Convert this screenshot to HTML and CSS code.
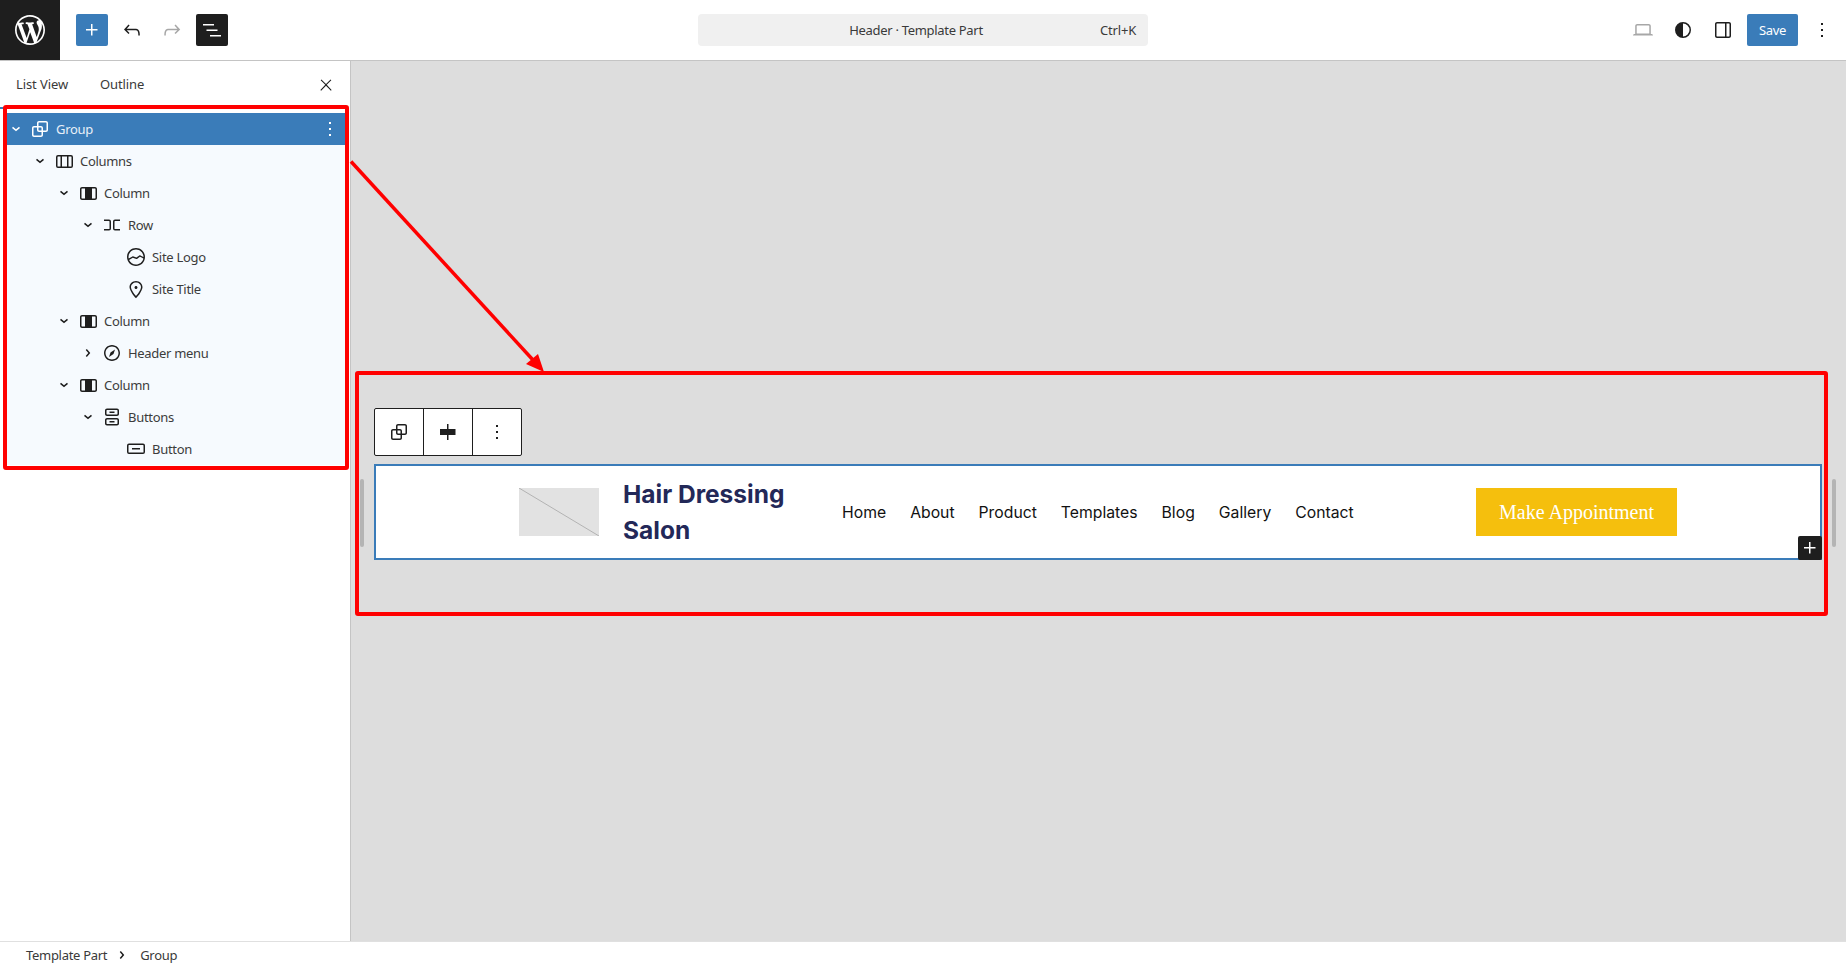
FILE: index.html
```html
<!DOCTYPE html>
<html lang="en">
<head>
<meta charset="utf-8">
<title>Header · Template Part</title>
<link rel="stylesheet" href="styles.css">
</head>
<body>
<header class="topbar">
  <div class="top-left">
    <a class="wp-logo"><svg width="36" height="36" viewBox="-2 -2 24 24" fill="#fff"><path d="M20 10c0-5.51-4.49-10-10-10C4.48 0 0 4.49 0 10c0 5.52 4.48 10 10 10 5.51 0 10-4.48 10-10zM7.78 15.37L4.37 6.22c.55-.02 1.17-.08 1.17-.08.5-.06.44-1.13-.06-1.11 0 0-1.45.11-2.37.11-.18 0-.37 0-.58-.01C4.12 2.69 6.87 1.11 10 1.11c2.33 0 4.45.87 6.05 2.34-.68-.11-1.65.39-1.65 1.58 0 .74.45 1.36.9 2.1.35.61.55 1.36.55 2.46 0 1.49-1.4 5-1.4 5l-3.03-8.37c.54-.02.82-.17.82-.17.5-.05.44-1.25-.06-1.22 0 0-1.44.12-2.38.12-.87 0-2.33-.12-2.33-.12-.5-.03-.56 1.2-.06 1.22l.92.08 1.26 3.41zM17.41 10c.24-.64.74-1.87.43-4.25.7 1.29 1.05 2.71 1.05 4.25 0 3.29-1.73 6.24-4.4 7.78.97-2.59 1.94-5.2 2.92-7.78zM6.1 18.09C3.12 16.65 1.11 13.53 1.11 10c0-1.3.23-2.48.72-3.59C3.25 10.3 4.67 14.2 6.1 18.09zm4.03-6.63l2.58 6.98c-.86.29-1.76.45-2.71.45-.79 0-1.57-.11-2.29-.33.81-2.38 1.62-4.74 2.42-7.1z"/></svg></a>
    <div class="tools">
      <button class="btn primary"><svg class="ic" viewBox="0 0 24 24"><path d="M11 12.5V17.5H12.5V12.5H17.5V11H12.5V6H11V11H6V12.5H11Z"/></svg></button>
      <button class="btn"><svg class="ic" viewBox="0 0 24 24"><path d="M18.3 11.7c-.6-.6-1.4-.9-2.3-.9H6.7l2.9-3.3-1.1-1-4.5 5L8.5 16l1-1-2.7-2.7H16c.5 0 .9.2 1.3.5 1 1 1 3.4 1 4.5v.3h1.5v-.2c0-1.5 0-4.3-1.5-5.7z"/></svg></button>
      <button class="btn muted"><svg class="ic" viewBox="0 0 24 24"><path d="M15.6 6.5l-1.1 1 2.9 3.3H8c-.9 0-1.7.3-2.3.9-1.4 1.5-1.4 4.2-1.4 5.6v.2h1.5v-.3c0-1.1 0-3.5 1-4.5.3-.3.7-.5 1.3-.5h9.2L14.5 15l1.1 1.1 4.6-4.6-4.6-5z"/></svg></button>
      <button class="btn dark"><svg class="ic" viewBox="0 0 24 24"><path d="M3 6h11v1.5H3V6Zm3.5 5.5h11V13h-11v-1.5ZM21 17H10v1.5h11V17Z"/></svg></button>
    </div>
  </div>
  <div class="command">
    <span class="command-title">Header · Template Part</span>
    <span class="command-key">Ctrl+K</span>
  </div>
  <div class="top-right">
    <button class="btn muted"><svg class="ic" viewBox="0 0 24 24"><path d="M20.5 16h-.7V8c0-1.1-.9-2-2-2H6.2c-1.1 0-2 .9-2 2v8h-.7c-.8 0-1.5.7-1.5 1.5h20c0-.8-.7-1.5-1.5-1.5zM5.7 8c0-.3.2-.5.5-.5h11.6c.3 0 .5.2.5.5v7.6H5.7V8z"/></svg></button>
    <button class="btn"><svg class="ic" viewBox="0 0 24 24"><path fill-rule="evenodd" d="M12 4a8 8 0 1 0 0 16 8 8 0 0 0 0-16zm0 1.5a6.5 6.5 0 0 1 0 13v-13z"/></svg></button>
    <button class="btn"><svg class="ic" viewBox="0 0 24 24"><path d="M18 4H6c-1.1 0-2 .9-2 2v12c0 1.1.9 2 2 2h12c1.1 0 2-.9 2-2V6c0-1.1-.9-2-2-2zm-4 14.5H6c-.3 0-.5-.2-.5-.5V6c0-.3.2-.5.5-.5h8v13zm4.5-.5c0 .3-.2.5-.5.5h-2.5v-13H18c.3 0 .5.2.5.5v12z"/></svg></button>
    <button class="save">Save</button>
    <button class="btn"><svg class="ic" viewBox="0 0 24 24"><path d="M13 19h-2v-2h2v2zm0-6h-2v-2h2v2zm0-6h-2V5h2v2z"/></svg></button>
  </div>
</header>

<div class="workspace">
  <aside class="sidebar">
    <div class="tabs">
      <div class="tab active">List View</div>
      <div class="tab">Outline</div>
      <svg class="ic tabs-close" viewBox="0 0 24 24"><path d="M13 11.8l6.1-6.3-1-1-6.1 6.2-6.1-6.2-1 1 6.1 6.3-6.5 6.7 1 1 6.5-6.6 6.5 6.6 1-1z"/></svg>
    </div>
    <ul class="tree">
      <li class="row selected l0">
        <svg class="ic" viewBox="0 0 24 24"><path d="m15.99 10.889-3.988 3.418-3.988-3.418.976-1.14 3.012 2.582 3.012-2.581.976 1.139Z"/></svg>
        <svg class="ic" viewBox="0 0 24 24"><path d="M18 4h-7c-1.1 0-2 .9-2 2v3H6c-1.1 0-2 .9-2 2v7c0 1.1.9 2 2 2h7c1.1 0 2-.9 2-2v-3h3c1.1 0 2-.9 2-2V6c0-1.1-.9-2-2-2zm-4.5 14c0 .3-.2.5-.5.5H6c-.3 0-.5-.2-.5-.5v-7c0-.3.2-.5.5-.5h3V13c0 1.1.9 2 2 2h2.5v3zm0-4.5H11c-.3 0-.5-.2-.5-.5v-2.5H13c.3 0 .5.2.5.5v2.5zm5-.5c0 .3-.2.5-.5.5h-3V11c0-1.1-.9-2-2-2h-2.5V6c0-.3.2-.5.5-.5h7c.3 0 .5.2.5.5v7z"/></svg>
        <span class="label">Group</span>
        <svg class="ic row-more" viewBox="0 0 24 24"><path d="M13 19h-2v-2h2v2zm0-6h-2v-2h2v2zm0-6h-2V5h2v2z"/></svg>
      </li>
      <li class="row l1">
        <svg class="ic" viewBox="0 0 24 24"><path d="m15.99 10.889-3.988 3.418-3.988-3.418.976-1.14 3.012 2.582 3.012-2.581.976 1.139Z"/></svg>
        <svg class="ic" viewBox="0 0 24 24"><path fill-rule="evenodd" d="M15 7.5h-5v10h5v-10Zm1.5 0v10H19a.5.5 0 0 0 .5-.5V8a.5.5 0 0 0-.5-.5h-2.5ZM6 7.5h2.5v10H6a.5.5 0 0 1-.5-.5V8a.5.5 0 0 1 .5-.5ZM6 6h13a2 2 0 0 1 2 2v9a2 2 0 0 1-2 2H6a2 2 0 0 1-2-2V8a2 2 0 0 1 2-2Z"/></svg>
        <span class="label">Columns</span>
      </li>
      <li class="row l2">
        <svg class="ic" viewBox="0 0 24 24"><path d="m15.99 10.889-3.988 3.418-3.988-3.418.976-1.14 3.012 2.582 3.012-2.581.976 1.139Z"/></svg>
        <svg class="ic" viewBox="0 0 24 24"><path d="M19 6H6c-1.1 0-2 .9-2 2v9c0 1.1.9 2 2 2h13c1.1 0 2-.9 2-2V8c0-1.1-.9-2-2-2zM6 17.5c-.3 0-.5-.2-.5-.5V8c0-.3.2-.5.5-.5h3v10H6zm13.5-.5c0 .3-.2.5-.5.5h-3v-10h3c.3 0 .5.2.5.5v9z"/></svg>
        <span class="label">Column</span>
      </li>
      <li class="row l3">
        <svg class="ic" viewBox="0 0 24 24"><path d="m15.99 10.889-3.988 3.418-3.988-3.418.976-1.14 3.012 2.582 3.012-2.581.976 1.139Z"/></svg>
        <svg class="ic" viewBox="0 0 24 24"><path d="M4 6.5h5a2 2 0 0 1 2 2v7a2 2 0 0 1-2 2H4V16h5a.5.5 0 0 0 .5-.5v-7A.5.5 0 0 0 9 8H4V6.5Zm16 0h-5a2 2 0 0 0-2 2v7a2 2 0 0 0 2 2h5V16h-5a.5.5 0 0 1-.5-.5v-7A.5.5 0 0 1 15 8h5V6.5Z"/></svg>
        <span class="label">Row</span>
      </li>
      <li class="row l4">
        <span class="spacer"></span>
        <svg class="ic" viewBox="0 0 24 24"><path d="M12 3c-5 0-9 4-9 9s4 9 9 9 9-4 9-9-4-9-9-9zm0 1.5c4.1 0 7.5 3.4 7.5 7.5v.1c-1.4-.8-3.3-1.7-3.4-1.8-.2-.1-.5-.1-.8.1l-2.9 2.1L9 11.3c-.2-.1-.4 0-.6.1l-3.7 2.2c-.1-.5-.2-1-.2-1.5 0-4.1 3.4-7.5 7.5-7.5zm0 15c-3.1 0-5.7-1.9-6.9-4.5l3.7-2.2 3.5 1.2c.2.1.5 0 .7-.1l2.9-2.1c.8.4 2.5 1.2 3.5 1.9-.9 3.3-3.9 5.8-7.4 5.8z"/></svg>
        <span class="label">Site Logo</span>
      </li>
      <li class="row l4">
        <span class="spacer"></span>
        <svg class="ic" viewBox="0 0 24 24"><path d="M12 9c-.8 0-1.5.7-1.5 1.5S11.2 12 12 12s1.5-.7 1.5-1.5S12.8 9 12 9zm0-5c-3.6 0-6.5 2.8-6.5 6.2 0 .8.3 1.8.9 3.1.5 1.1 1.2 2.3 2 3.6.7 1 3 3.8 3.2 3.9l.4.5.4-.5c.2-.2 2.6-2.9 3.2-3.9.8-1.2 1.5-2.5 2-3.6.6-1.3.9-2.3.9-3.1C18.5 6.8 15.6 4 12 4zm4.3 8.7c-.5 1-1.1 2.2-1.9 3.4-.5.7-1.7 2.2-2.4 3-.7-.8-1.9-2.3-2.4-3-.8-1.2-1.4-2.3-1.9-3.3-.6-1.4-.7-2.2-.7-2.5 0-2.6 2.2-4.7 5-4.7s5 2.1 5 4.7c0 .2-.1 1-.7 2.4z"/></svg>
        <span class="label">Site Title</span>
      </li>
      <li class="row l2">
        <svg class="ic" viewBox="0 0 24 24"><path d="m15.99 10.889-3.988 3.418-3.988-3.418.976-1.14 3.012 2.582 3.012-2.581.976 1.139Z"/></svg>
        <svg class="ic" viewBox="0 0 24 24"><path d="M19 6H6c-1.1 0-2 .9-2 2v9c0 1.1.9 2 2 2h13c1.1 0 2-.9 2-2V8c0-1.1-.9-2-2-2zM6 17.5c-.3 0-.5-.2-.5-.5V8c0-.3.2-.5.5-.5h3v10H6zm13.5-.5c0 .3-.2.5-.5.5h-3v-10h3c.3 0 .5.2.5.5v9z"/></svg>
        <span class="label">Column</span>
      </li>
      <li class="row l3">
        <svg class="ic" viewBox="0 0 24 24"><path d="M10.8622 8.04053L14.2805 12.0286L10.8622 16.0167L9.72327 15.0405L12.3049 12.0286L9.72327 9.01672L10.8622 8.04053Z"/></svg>
        <svg class="ic" viewBox="0 0 24 24"><path d="M12 4c-4.4 0-8 3.6-8 8s3.6 8 8 8 8-3.6 8-8-3.6-8-8-8zm0 14.5c-3.6 0-6.5-2.9-6.5-6.5S8.4 5.5 12 5.5s6.5 2.9 6.5 6.5-2.9 6.5-6.5 6.5zM9 16l4.5-3L15 8.4l-4.5 3L9 16z"/></svg>
        <span class="label">Header menu</span>
      </li>
      <li class="row l2">
        <svg class="ic" viewBox="0 0 24 24"><path d="m15.99 10.889-3.988 3.418-3.988-3.418.976-1.14 3.012 2.582 3.012-2.581.976 1.139Z"/></svg>
        <svg class="ic" viewBox="0 0 24 24"><path d="M19 6H6c-1.1 0-2 .9-2 2v9c0 1.1.9 2 2 2h13c1.1 0 2-.9 2-2V8c0-1.1-.9-2-2-2zM6 17.5c-.3 0-.5-.2-.5-.5V8c0-.3.2-.5.5-.5h3v10H6zm13.5-.5c0 .3-.2.5-.5.5h-3v-10h3c.3 0 .5.2.5.5v9z"/></svg>
        <span class="label">Column</span>
      </li>
      <li class="row l3">
        <svg class="ic" viewBox="0 0 24 24"><path d="m15.99 10.889-3.988 3.418-3.988-3.418.976-1.14 3.012 2.582 3.012-2.581.976 1.139Z"/></svg>
        <svg class="ic" viewBox="0 0 24 24"><path fill-rule="evenodd" d="M14.5 17.5H9.5V16H14.5V17.5Z M14.5 8H9.5V6.5H14.5V8Z M7 3.5H17C18.1046 3.5 19 4.39543 19 5.5V9C19 10.1046 18.1046 11 17 11H7C5.89543 11 5 10.1046 5 9V5.5C5 4.39543 5.89543 3.5 7 3.5ZM17 5H7C6.72386 5 6.5 5.22386 6.5 5.5V9C6.5 9.27614 6.72386 9.5 7 9.5H17C17.2761 9.5 17.5 9.27614 17.5 9V5.5C17.5 5.22386 17.2761 5 17 5Z M7 13H17C18.1046 13 19 13.8954 19 15V18.5C19 19.6046 18.1046 20.5 17 20.5H7C5.89543 20.5 5 19.6046 5 18.5V15C5 13.8954 5.89543 13 7 13ZM17 14.5H7C6.72386 14.5 6.5 14.7239 6.5 15V18.5C6.5 18.7761 6.72386 19 7 19H17C17.2761 19 17.5 18.7761 17.5 18.5V15C17.5 14.7239 17.2761 14.5 17 14.5Z"/></svg>
        <span class="label">Buttons</span>
      </li>
      <li class="row l4">
        <span class="spacer"></span>
        <svg class="ic" viewBox="0 0 24 24"><path fill-rule="evenodd" d="M8 12.5h8V11H8v1.5Z M19 6.5H5a2 2 0 0 0-2 2V15a2 2 0 0 0 2 2h14a2 2 0 0 0 2-2V8.5a2 2 0 0 0-2-2ZM5 8h14a.5.5 0 0 1 .5.5V15a.5.5 0 0 1-.5.5H5a.5.5 0 0 1-.5-.5V8.5A.5.5 0 0 1 5 8Z"/></svg>
        <span class="label">Button</span>
      </li>
    </ul>
  </aside>

  <main class="canvas">
    <span class="handle handle-left"></span>
    <span class="handle handle-right"></span>
    <div class="toolbar">
      <button class="tb"><svg class="ic" viewBox="0 0 24 24"><path d="M18 4h-7c-1.1 0-2 .9-2 2v3H6c-1.1 0-2 .9-2 2v7c0 1.1.9 2 2 2h7c1.1 0 2-.9 2-2v-3h3c1.1 0 2-.9 2-2V6c0-1.1-.9-2-2-2zm-4.5 14c0 .3-.2.5-.5.5H6c-.3 0-.5-.2-.5-.5v-7c0-.3.2-.5.5-.5h3V13c0 1.1.9 2 2 2h2.5v3zm0-4.5H11c-.3 0-.5-.2-.5-.5v-2.5H13c.3 0 .5.2.5.5v2.5zm5-.5c0 .3-.2.5-.5.5h-3V11c0-1.1-.9-2-2-2h-2.5V6c0-.3.2-.5.5-.5h7c.3 0 .5.2.5.5v7z"/></svg></button>
      <button class="tb"><svg class="ic" viewBox="0 0 24 24"><path d="M12.5 15v5H11v-5H4V9h7V4h1.5v5h7v6h-7Z"/></svg></button>
      <button class="tb"><svg class="ic" viewBox="0 0 24 24"><path d="M13 19h-2v-2h2v2zm0-6h-2v-2h2v2zm0-6h-2V5h2v2z"/></svg></button>
    </div>
    <section class="block">
      <div class="col-brand">
        <svg class="placeholder" viewBox="0 0 80 48" preserveAspectRatio="none"><line x1="0" y1="0" x2="80" y2="48"/></svg>
        <h1 class="site-title">Hair Dressing Salon</h1>
      </div>
      <nav class="menu">
        <a>Home</a><a>About</a><a>Product</a><a>Templates</a><a>Blog</a><a>Gallery</a><a>Contact</a>
      </nav>
      <a class="cta">Make Appointment</a>
      <span class="appender"><svg class="ic" viewBox="0 0 24 24"><path d="M11 12.5V17.5H12.5V12.5H17.5V11H12.5V6H11V11H6V12.5H11Z"/></svg></span>
    </section>
  </main>
</div>

<footer class="crumbs">
  <span>Template Part</span>
  <svg class="ic" viewBox="0 0 24 24"><path d="M10.8622 8.04053L14.2805 12.0286L10.8622 16.0167L9.72327 15.0405L12.3049 12.0286L9.72327 9.01672L10.8622 8.04053Z"/></svg>
  <span>Group</span>
</footer>

<svg class="marks" width="1846" height="966" viewBox="0 0 1846 966">
  <rect class="mark" x="5" y="107" width="342" height="361" rx="1"/>
  <rect class="mark" x="357" y="373" width="1469" height="241" rx="1"/>
  <line class="mark-line" x1="351" y1="161.5" x2="533" y2="360"/>
  <polygon class="mark-head" points="544,372 538,354 526,364"/>
</svg>
</body>
</html>
```
FILE: styles.css
```css
* { box-sizing: border-box; }
html, body { margin: 0; height: 100%; }
body {
  width: 1846px;
  height: 966px;
  overflow: hidden;
  position: relative;
  display: flex;
  flex-direction: column;
  background: #fff;
  font-family: "Noto Sans", sans-serif;
  font-size: 13px;
  letter-spacing: -0.3px;
  color: #1e1e1e;
}
button { font: inherit; letter-spacing: inherit; border: 0; padding: 0; background: none; color: inherit; }
ul { list-style: none; margin: 0; padding: 0; }
.ic { width: 24px; height: 24px; fill: currentColor; flex: none; display: block; }

.topbar {
  height: 61px;
  flex: none;
  border-bottom: 1px solid #c4c4c4;
  display: grid;
  grid-template-columns: 1fr 450px 1fr;
  align-items: center;
}
.top-left { display: flex; align-items: center; height: 60px; }
.wp-logo {
  width: 60px; height: 60px;
  background: #1e1e1e;
  display: flex; align-items: center; justify-content: center;
}
.tools { display: flex; gap: 8px; margin-left: 16px; }
.btn {
  width: 32px; height: 32px;
  border-radius: 2px;
  display: flex; align-items: center; justify-content: center;
  color: #1e1e1e;
}
.btn.primary { background: #3a7cb9; color: #fff; }
.btn.dark { background: #1e1e1e; color: #fff; }
.btn.muted { color: #a7a7a7; }

.command {
  height: 32px;
  background: #f0f0f0;
  border-radius: 4px;
  position: relative;
  display: flex; align-items: center; justify-content: center;
  padding-right: 14px;
  color: #3a3a3a;
}
.command-key { position: absolute; right: 12px; top: 7px; letter-spacing: -0.2px; }

.top-right {
  display: flex; align-items: center; justify-content: flex-end;
  gap: 8px;
  padding-right: 8px;
}
.save {
  width: 51px; height: 32px;
  background: #3a7cb9;
  color: #fff;
  border-radius: 2px;
}

.workspace { flex: 1; display: flex; min-height: 0; }
.sidebar {
  width: 351px;
  flex: none;
  border-right: 1px solid #c4c4c4;
  background: #fff;
}
.tabs {
  height: 48px;
  display: flex; align-items: center;
  color: #3a3a3a;
  letter-spacing: -0.1px;
}
.tab { height: 48px; line-height: 47px; padding: 0 16px; position: relative; }
.tab.active::after {
  content: "";
  position: absolute;
  left: 0; right: 0; bottom: 0;
  height: 2px;
  background: #3a7cb9;
}
.tabs-close { width: 18px; height: 18px; margin-left: auto; margin-right: 15px; color: #1e1e1e; }

.tree { margin: 4px 4px 0; background: #f6fafe; }
.row {
  height: 32px;
  display: flex; align-items: center;
  color: #3c3c3c;
}
.row .ic { color: #1e1e1e; }
.label { margin-left: 4px; }
.spacer { width: 24px; flex: none; }
.l1 { padding-left: 24px; }
.l2 { padding-left: 48px; }
.l3 { padding-left: 72px; }
.l4 { padding-left: 96px; }
.selected { background: #3a7cb9; color: #fff; }
.selected .ic { color: #fff; }
.selected .label { color: #e8f0f8; }
.row-more { margin-left: auto; margin-right: 4px; }

.canvas {
  flex: 1;
  background: #ddd;
  padding: 347px 24px 0 23px;
  position: relative;
  min-width: 0;
}
.handle {
  position: absolute;
  top: 418px;
  width: 4px; height: 68px;
  border-radius: 2px;
  background: #b4b4b4;
}
.handle-left { left: 9px; }
.handle-right { right: 10px; }

.toolbar {
  width: 148px; height: 48px;
  display: flex;
  background: #fff;
  border: 1px solid #1e1e1e;
  border-radius: 2px;
}
.tb {
  flex: 1;
  display: flex; align-items: center; justify-content: center;
  border-right: 1px solid #1e1e1e;
}
.tb:last-child { border-right: 0; }

.block {
  margin-top: 8px;
  height: 96px;
  background: #fff;
  border: 2px solid #3a7cb9;
  display: grid;
  grid-template-columns: 323px 634px 201px;
  align-items: center;
  padding-left: 143px;
  position: relative;
  font-family: Inter, sans-serif;
  letter-spacing: 0;
}
.col-brand { display: flex; align-items: center; gap: 24px; }
.placeholder { width: 80px; height: 48px; background: #e2e2e2; flex: none; }
.placeholder line { stroke: #b3b3b3; stroke-width: 1; }
.site-title {
  margin: 0;
  width: 190px;
  font-size: 24.5px;
  line-height: 36.5px;
  font-weight: 700;
  color: #232858;
}
.menu { display: flex; gap: 24px; font-size: 15.75px; color: #111; padding-top: 1px; }
.cta {
  height: 48px;
  background: #f5bf0d;
  color: #fff;
  display: flex; align-items: center; justify-content: center;
  font-family: "Liberation Serif", serif;
  font-size: 20px;
}
.appender {
  position: absolute;
  right: -2px; bottom: -2px;
  width: 24px; height: 24px;
  background: #1e1e1e;
  color: #fff;
  border-radius: 2px;
}

.crumbs {
  height: 25px;
  flex: none;
  border-top: 1px solid #e0e0e0;
  display: flex; align-items: center;
  padding: 1px 0 0 26px;
  color: #3a3a3a;
}
.crumbs .ic { margin: 0 6px 0 3px; color: #1e1e1e; }

.marks { position: absolute; left: 0; top: 0; pointer-events: none; }
.mark { fill: none; stroke: #f00; stroke-width: 4; }
.mark-line { stroke: #f00; stroke-width: 3.5; }
.mark-head { fill: #f00; }
```
